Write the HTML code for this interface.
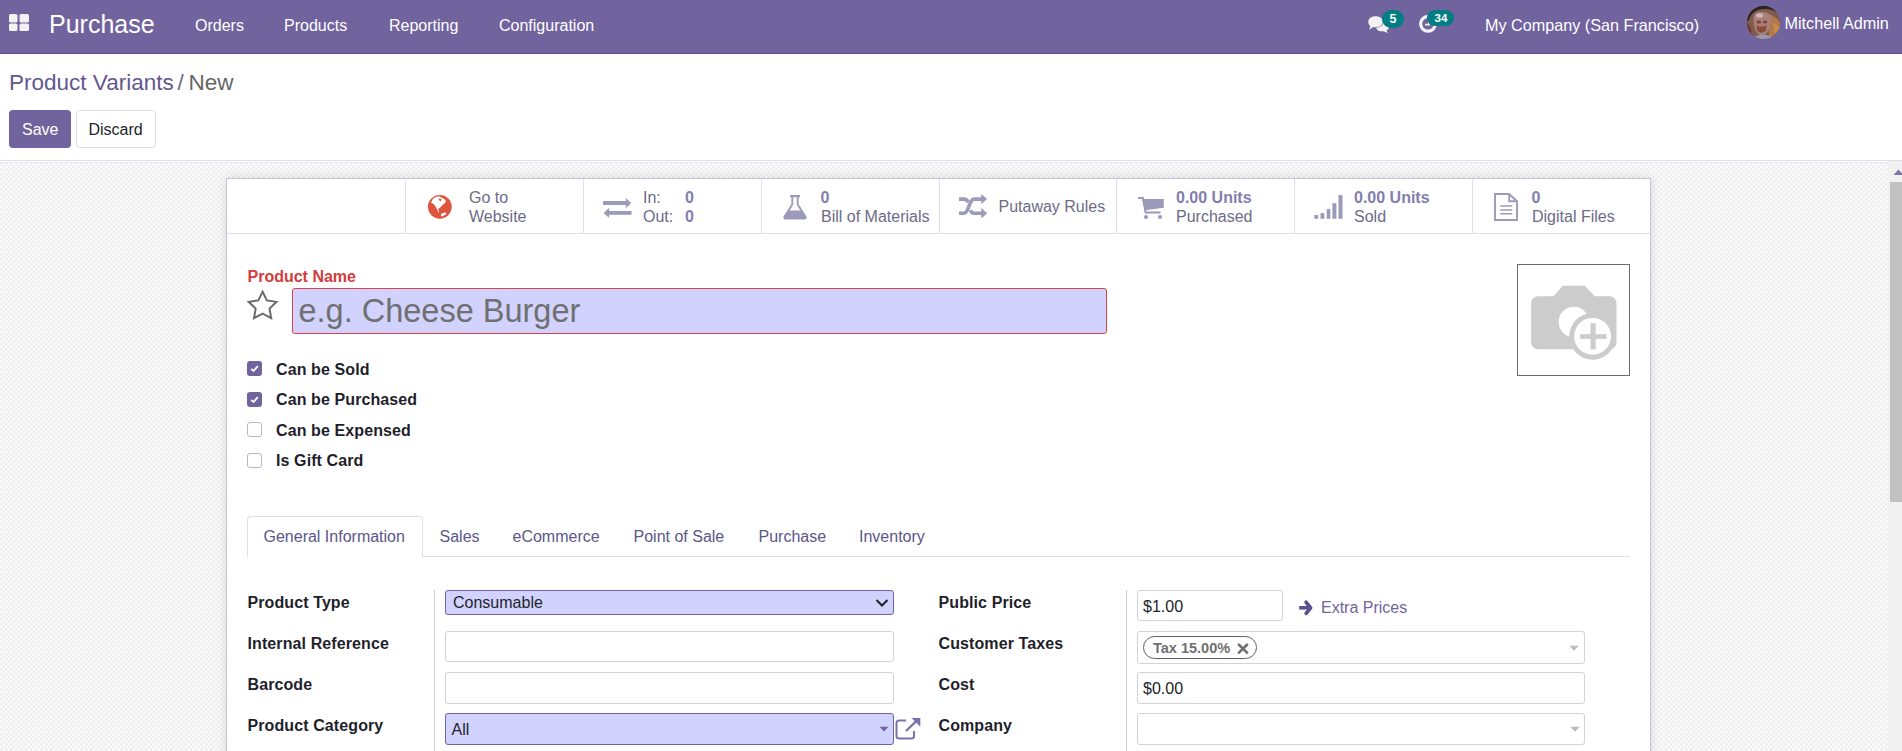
<!DOCTYPE html>
<html><head><meta charset="utf-8">
<style>
*{box-sizing:border-box;margin:0;padding:0}
html,body{width:1902px;height:751px;overflow:hidden;background:#fff;font-family:"Liberation Sans",sans-serif;color:#212529}
.a{position:absolute}
.t{position:absolute;white-space:nowrap;line-height:1}
.w{color:#fff}
.st{color:#6c6b88;font-size:16px}
.sv{color:#827eae;font-weight:bold;font-size:16px}
.lbl{font-weight:bold;font-size:16px;color:#1f1f2b;letter-spacing:0.1px}
.inp{position:absolute;border:1px solid #d0d3d8;border-radius:3px;background:#fff}
.req{background:#d2d2ff;border-color:#6f62a3}
.tab{font-size:16px;color:#5c5689}
.cb{position:absolute;left:247px;width:15px;height:15px;border-radius:3px}
.cb.on{background:#71639e}
.cb.off{border:1px solid #b9b5cf;background:#fff}
.sep{position:absolute;top:179px;width:1px;height:54px;background:#dee2e6}
</style></head><body>

<!-- NAVBAR -->
<div class="a" style="left:0;top:0;width:1902px;height:53px;background:#71639e"></div>
<div class="a" style="left:0;top:53px;width:1902px;height:1px;background:#5b4f86"></div>
<svg class="a" style="left:9px;top:14px" width="20" height="17" viewBox="0 0 20 17">
  <rect x="0" y="0" width="8.5" height="8.5" rx="1.6" fill="#f2f2f2"/>
  <rect x="10.5" y="0" width="9.5" height="8.5" rx="1.6" fill="#f2f2f2"/>
  <rect x="0" y="9.6" width="8.5" height="7.4" rx="1.6" fill="#f2f2f2"/>
  <rect x="10.5" y="9.6" width="9.5" height="7.4" rx="1.6" fill="#f2f2f2"/>
</svg>
<div class="t w" style="left:49px;top:11.6px;font-size:25px">Purchase</div>
<div class="t w" style="left:195px;top:17.7px;font-size:16px">Orders</div>
<div class="t w" style="left:284px;top:17.7px;font-size:16px">Products</div>
<div class="t w" style="left:389px;top:17.7px;font-size:16px">Reporting</div>
<div class="t w" style="left:499px;top:17.7px;font-size:16px">Configuration</div>
<!-- chat icon -->
<svg class="a" style="left:1366px;top:14px" width="26" height="22" viewBox="0 0 26 22">
  <path d="M10 12.5 C10 9 13 8 16.5 8 C20.5 8 23 10 23 12.8 C23 14.5 22 15.8 20.5 16.6 L22 19 L17.5 17.3 C16.5 17.5 15.5 17.5 14.5 17.3 C11.5 16.8 10 15 10 12.5 Z" fill="#f2f2f2"/>
  <ellipse cx="9.6" cy="7.7" rx="8.3" ry="6.2" fill="#71639e"/>
  <path d="M2.3 7.7 C2.3 4.3 5.5 2.2 9.6 2.2 C13.7 2.2 16.9 4.3 16.9 7.7 C16.9 11.1 13.7 13.2 9.6 13.2 C8.8 13.2 8 13.1 7.3 12.9 L3.2 15.8 L4.3 12 C3 11 2.3 9.5 2.3 7.7 Z" fill="#f2f2f2"/>
</svg>
<div class="a" style="left:1382px;top:9.5px;width:22px;height:18.5px;border-radius:9.5px;background:#017e84"></div>
<div class="t w" style="left:1389.5px;top:13px;font-size:12.5px;font-weight:bold">5</div>
<!-- clock icon -->
<svg class="a" style="left:1417px;top:13px" width="22" height="22" viewBox="0 0 22 22">
  <circle cx="11" cy="10.8" r="7.4" fill="none" stroke="#f2f2f2" stroke-width="3.2"/>
  <path d="M8 11.6 H12 V6" fill="none" stroke="#f2f2f2" stroke-width="1.8"/>
</svg>
<div class="a" style="left:1427px;top:9.7px;width:27px;height:16.5px;border-radius:8.5px;background:#017e84"></div>
<div class="t w" style="left:1434.5px;top:13.2px;font-size:11.5px;font-weight:bold">34</div>
<div class="t w" style="left:1485px;top:16.5px;font-size:16.2px">My Company (San Francisco)</div>
<!-- avatar -->
<svg class="a" style="left:1746px;top:6px" width="35" height="35" viewBox="0 0 35 35">
  <defs><clipPath id="av"><circle cx="17.5" cy="16.5" r="16.6"/></clipPath></defs>
  <g clip-path="url(#av)">
    <rect width="35" height="35" fill="#7e5a4c"/>
    <path d="M23 8 C28 10 33 14 35 18 V35 H23 Z" fill="#b07850"/>
    <path d="M27 16 L35 22 V30 L28 26 Z" fill="#c98a48"/>
    <path d="M0 0 H35 V10 C31 5 25 3 18 3 C10 3 5 7 3 14 L0 16 Z" fill="#2a2323"/>
    <path d="M8 9 C11 4.5 21 4.5 24 9 C25.5 12 25 18 23.5 22 C22 27 19 29 16 29 C12.5 29 10 26.5 8.8 22.5 C7.5 18 7 12.5 8 9 Z" fill="#a8807a"/>
    <ellipse cx="13.5" cy="9.5" rx="3.5" ry="2.2" fill="#cdb8bb"/>
    <ellipse cx="12.8" cy="16" rx="2.4" ry="1.6" fill="#84402f"/>
    <ellipse cx="19" cy="16" rx="2.2" ry="1.6" fill="#84402f"/>
    <path d="M10 19 C12 21 18 21 21 19 L19.5 25 C17 27 13.5 27 11.5 25 Z" fill="#8e4a38"/>
    <path d="M0 16 C4 19 6 26 7 35 H0 Z" fill="#6e3424"/>
    <ellipse cx="17" cy="34" rx="10" ry="5.5" fill="#9d98a6"/>
  </g>
</svg>
<div class="t w" style="left:1784.5px;top:15px;font-size:16.2px">Mitchell Admin</div>

<!-- CONTROL PANEL -->
<div class="t" style="left:9px;top:71.5px;font-size:22.5px;color:#62578f">Product Variants</div>
<div class="t" style="left:177.5px;top:71.5px;font-size:22.5px;color:#6d6880">/</div>
<div class="t" style="left:188.5px;top:71.5px;font-size:22.5px;color:#666">New</div>
<div class="a" style="left:9px;top:110px;width:62px;height:38px;background:#71639e;border-radius:4px"></div>
<div class="t w" style="left:22px;top:121.5px;font-size:16px">Save</div>
<div class="a" style="left:76px;top:110px;width:80px;height:38px;background:#fff;border:1px solid #dee2e6;border-radius:4px"></div>
<div class="t" style="left:88.5px;top:121.5px;font-size:16px;color:#212529">Discard</div>
<div class="a" style="left:0;top:160px;width:1902px;height:1px;background:#dde1e6"></div>
<div class="a" style="left:0;top:162px;width:1888px;height:1px;background:#e3e6ea"></div>

<!-- CONTENT BG -->
<div class="a" style="left:0;top:163px;width:1888px;height:588px;background-color:#fcfcfc;background-image:radial-gradient(circle at 1.25px 1.25px,#e9e9e9 0,#ececec 0.7px,rgba(236,236,236,0) 1.9px),radial-gradient(circle at 3.75px 3.75px,#e9e9e9 0,#ececec 0.7px,rgba(236,236,236,0) 1.9px);background-size:5px 5px"></div>
<div class="a" style="left:1888px;top:161px;width:14px;height:590px;background:#f1f1f1"></div>
<svg class="a" style="left:1893px;top:169px" width="9" height="7" viewBox="0 0 9 7"><path d="M0.5 6 L5.5 0.5 L10.5 6 Z" fill="#7b76a8"/></svg>
<div class="a" style="left:1890px;top:182px;width:12px;height:320px;background:#c1c1c1"></div>

<!-- SHEET -->
<div class="a" style="left:226px;top:178px;width:1425px;height:600px;background:#fff;border:1px solid #c4c3d5;box-shadow:0 0 10px rgba(40,40,80,.13)"></div>
<div class="a" style="left:227px;top:233px;width:1423px;height:1px;background:#dee2e6"></div>
<div class="sep" style="left:405px"></div>
<div class="sep" style="left:583px"></div>
<div class="sep" style="left:761px"></div>
<div class="sep" style="left:939px"></div>
<div class="sep" style="left:1116px"></div>
<div class="sep" style="left:1294px"></div>
<div class="sep" style="left:1472px"></div>

<!-- button 1: globe -->
<svg class="a" style="left:422px;top:189px" width="36" height="36" viewBox="0 0 36 36">
  <circle cx="17.83" cy="17.83" r="11.9" fill="#de5540"/>
  <path d="M9.35 12.94 L11.03 9.59 L14.38 7.67 L17.26 7.19 L19.18 8.39 L23.01 10.55 L23.97 12.46 L22.53 14.38 L20.13 16.30 L18.70 18.22 L16.78 19.18 L16.30 20.61 L17.02 22.53 L16.78 23.97 L15.34 21.09 L13.90 18.22 L11.98 15.34 L9.35 13.66 Z" fill="#fff"/>
  <path d="M16.54 10.31 L18.22 9.35 L19.42 10.79 L18.70 12.22 L17.26 11.51 Z" fill="#de5540"/>
  <path d="M18.94 25.41 L20.61 23.97 L23.49 23.49 L24.45 24.45 L22.53 26.37 L20.13 27.56 L18.94 26.85 Z" fill="#fff"/>
</svg>
<div class="t st" style="left:469px;top:189.5px">Go to</div>
<div class="t st" style="left:469px;top:209px">Website</div>

<!-- button 2: exchange -->
<svg class="a" style="left:603px;top:198px" width="29" height="21" viewBox="0 0 29 21">
  <rect x="0" y="3" width="23.5" height="4" fill="#9c9aba"/>
  <path d="M22.8 0 L28.3 5 L22.8 10.2 Z" fill="#9c9aba"/>
  <rect x="5.5" y="13" width="23" height="3.8" fill="#9c9aba"/>
  <path d="M6.2 9.7 L0.6 14.9 L6.2 20 Z" fill="#9c9aba"/>
</svg>
<div class="t st" style="left:643px;top:189.5px">In:</div>
<div class="t st" style="left:643px;top:209px">Out:</div>
<div class="t sv" style="left:685px;top:189.5px">0</div>
<div class="t sv" style="left:685px;top:209px">0</div>

<!-- button 3: flask -->
<svg class="a" style="left:783px;top:194px" width="25" height="26" viewBox="0 0 25 26">
  <rect x="7" y="1" width="10" height="2.2" fill="#9c9aba"/>
  <path d="M9.3 3 V10.5 L1.5 22.8 C1 23.8 1.5 24.6 2.6 24.6 H21.4 C22.5 24.6 23 23.8 22.5 22.8 L14.7 10.5 V3" fill="none" stroke="#9c9aba" stroke-width="1.9"/>
  <path d="M5.8 16.5 H18.2 L22.5 23 C23 24 22.5 24.6 21.4 24.6 H2.6 C1.5 24.6 1 24 1.5 23 Z" fill="#9c9aba"/>
</svg>
<div class="t sv" style="left:820.5px;top:189.5px">0</div>
<div class="t st" style="left:821px;top:209px">Bill of Materials</div>

<!-- button 4: shuffle -->
<svg class="a" style="left:959px;top:194px" width="29" height="25" viewBox="0 0 29 25">
  <g fill="none" stroke="#9c9aba" stroke-width="3.6">
    <path d="M0 19.3 H5 C10 19.3 10 5.1 15 5.1 H23"/>
    <path d="M0 5.1 H5 C7 5.1 8.3 6.3 9.3 8.3"/>
    <path d="M11.3 16.2 C12.3 18.3 13 19.3 15 19.3 H23"/>
  </g>
  <path d="M22.3 0 L28.1 5.1 L22.3 10.3 Z M22.3 14.1 L28.1 19.3 L22.3 24.5 Z" fill="#9c9aba"/>
</svg>
<div class="t st" style="left:998.5px;top:198.5px">Putaway Rules</div>

<!-- button 5: cart -->
<svg class="a" style="left:1137px;top:196px" width="28" height="24" viewBox="0 0 28 24">
  <path d="M1 2 H6 L8.5 16.5 H23.5" fill="none" stroke="#9c9aba" stroke-width="1.9"/>
  <path d="M5.2 3 H26.8 V11.8 L8 14.2 Z" fill="#9c9aba"/>
  <circle cx="9" cy="21" r="2.1" fill="#9c9aba"/>
  <circle cx="23" cy="21" r="2.1" fill="#9c9aba"/>
</svg>
<div class="t sv" style="left:1176px;top:189.5px">0.00 Units</div>
<div class="t st" style="left:1176px;top:209px">Purchased</div>

<!-- button 6: signal -->
<svg class="a" style="left:1314px;top:195px" width="30" height="24" viewBox="0 0 30 24">
  <rect x="0.4" y="20" width="3.8" height="3.8" fill="#9c9aba"/>
  <rect x="6.5" y="18.1" width="3.8" height="5.7" fill="#9c9aba"/>
  <rect x="12.7" y="14.1" width="3.6" height="9.7" fill="#9c9aba"/>
  <rect x="18.4" y="8.2" width="4" height="15.6" fill="#9c9aba"/>
  <rect x="24.5" y="0.1" width="4" height="23.7" fill="#9c9aba"/>
</svg>
<div class="t sv" style="left:1354px;top:189.5px">0.00 Units</div>
<div class="t st" style="left:1354px;top:209px">Sold</div>

<!-- button 7: file -->
<svg class="a" style="left:1493px;top:192px" width="27" height="30" viewBox="0 0 27 30">
  <path d="M2 2 H16.2 L24 9.2 V28 H2 Z" fill="none" stroke="#9c9aba" stroke-width="1.9"/>
  <path d="M16.2 2 V9.2 H24" fill="none" stroke="#9c9aba" stroke-width="1.9"/>
  <path d="M7.3 13.9 H19.3 M7.3 17.9 H19.3 M7.3 21.7 H19.3" stroke="#9c9aba" stroke-width="1.5"/>
</svg>
<div class="t sv" style="left:1531.5px;top:189.5px">0</div>
<div class="t st" style="left:1532px;top:209px">Digital Files</div>

<!-- TITLE -->
<div class="t" style="left:247.5px;top:269px;font-size:16px;font-weight:bold;color:#d23c3c">Product Name</div>
<svg class="a" style="left:246px;top:289px" width="34" height="33" viewBox="0 0 34 33">
  <path d="M16.60 2.75 L20.89 11.44 L30.49 12.84 L23.54 19.61 L25.18 29.16 L16.60 24.65 L8.02 29.16 L9.66 19.61 L2.71 12.84 L12.31 11.44 Z" stroke-linejoin="miter" fill="none" stroke="#6b6b6b" stroke-width="2"/>
</svg>
<div class="a" style="left:292px;top:288px;width:815px;height:46px;background:#d2d2ff;border:1px solid #d9404a;border-radius:3px"></div>
<div class="t" style="left:298.5px;top:294.6px;font-size:32.5px;color:#707070">e.g. Cheese Burger</div>

<!-- image -->
<div class="a" style="left:1517px;top:264px;width:113px;height:112px;border:1px solid #6c6c6c;background:#fff"></div>
<svg class="a" style="left:1530px;top:284px" width="90" height="80" viewBox="0 0 90 80">
  <path d="M23.3 12.2 L32.8 1.8 H54.8 L64.8 12.2 H79.5 C83.5 12.2 86.5 15.2 86.5 19.2 V58.3 C86.5 62.3 83.5 65.3 79.5 65.3 H8.1 C4.1 65.3 1.1 62.3 1.1 58.3 V19.2 C1.1 15.2 4.1 12.2 8.1 12.2 Z" fill="#cccccc"/>
  <circle cx="43.8" cy="38" r="15.2" fill="#fff"/>
  <circle cx="62.6" cy="52.35" r="23.35" fill="#cccccc"/>
  <circle cx="62.6" cy="52.35" r="18.4" fill="#fff"/>
  <rect x="50.1" y="50.2" width="26.4" height="4.7" fill="#cccccc"/>
  <rect x="60.5" y="39.2" width="5.2" height="26.3" fill="#cccccc"/>
</svg>

<!-- checkboxes -->
<div class="cb on" style="top:361px"></div>
<svg class="a" style="left:247px;top:361px" width="15" height="15" viewBox="0 0 15 15"><path d="M4.2 7.8 L6.5 10 L10.8 5.2" fill="none" stroke="#fff" stroke-width="1.8"/></svg>
<div class="cb on" style="top:392px"></div>
<svg class="a" style="left:247px;top:392px" width="15" height="15" viewBox="0 0 15 15"><path d="M4.2 7.8 L6.5 10 L10.8 5.2" fill="none" stroke="#fff" stroke-width="1.8"/></svg>
<div class="cb off" style="top:422px"></div>
<div class="cb off" style="top:453px"></div>
<div class="t lbl" style="left:276px;top:361.5px">Can be Sold</div>
<div class="t lbl" style="left:276px;top:391.5px">Can be Purchased</div>
<div class="t lbl" style="left:276px;top:422.8px">Can be Expensed</div>
<div class="t lbl" style="left:276px;top:452.8px">Is Gift Card</div>

<!-- TABS -->
<div class="a" style="left:247px;top:556px;width:1383px;height:1px;background:#dee2e6"></div>
<div class="a" style="left:247px;top:516px;width:176px;height:41px;background:#fff;border:1px solid #dee2e6;border-bottom:none;border-radius:4px 4px 0 0"></div>
<div class="t tab" style="left:263.5px;top:528.5px">General Information</div>
<div class="t tab" style="left:439.5px;top:528.5px">Sales</div>
<div class="t tab" style="left:512.5px;top:528.5px">eCommerce</div>
<div class="t tab" style="left:633.5px;top:528.5px">Point of Sale</div>
<div class="t tab" style="left:758.5px;top:528.5px">Purchase</div>
<div class="t tab" style="left:859px;top:528.5px">Inventory</div>

<!-- LEFT GROUP -->
<div class="a" style="left:434px;top:590px;width:1px;height:161px;background:#cfcfcf"></div>
<div class="t lbl" style="left:247.5px;top:594.5px">Product Type</div>
<div class="t lbl" style="left:247.5px;top:636px">Internal Reference</div>
<div class="t lbl" style="left:247.5px;top:677px">Barcode</div>
<div class="t lbl" style="left:247.5px;top:718px">Product Category</div>
<div class="inp req" style="left:445px;top:590px;width:449px;height:25px;border-radius:3px"></div>
<div class="t" style="left:453px;top:595px;font-size:16px;color:#212529">Consumable</div>
<svg class="a" style="left:875px;top:598px" width="14" height="10" viewBox="0 0 14 10"><path d="M1.5 2 L7 7.5 L12.5 2" fill="none" stroke="#222" stroke-width="2"/></svg>
<div class="inp" style="left:445px;top:631px;width:449px;height:31px"></div>
<div class="inp" style="left:445px;top:672px;width:449px;height:32px"></div>
<div class="inp req" style="left:445px;top:713px;width:449px;height:32px"></div>
<div class="t" style="left:451.5px;top:721.5px;font-size:16px;color:#212529">All</div>
<svg class="a" style="left:879px;top:726px" width="10" height="6" viewBox="0 0 10 6"><path d="M0.5 0.8 H9.5 L5 5.6 Z" fill="#71639e"/></svg>
<svg class="a" style="left:895px;top:717px" width="27" height="23" viewBox="0 0 27 23">
  <path d="M11 3.5 H4 C2.3 3.5 1.5 4.5 1.5 6 V19 C1.5 20.5 2.3 21.5 4 21.5 H16.5 C18.2 21.5 19 20.5 19 19 V14" fill="none" stroke="#7d70ae" stroke-width="2"/>
  <path d="M11 14 L23.5 2" fill="none" stroke="#7d70ae" stroke-width="2.4"/>
  <path d="M16.5 1 H25.3 V9.8 Z" fill="#7d70ae"/>
</svg>

<!-- RIGHT GROUP -->
<div class="a" style="left:1126px;top:590px;width:1px;height:161px;background:#cfcfcf"></div>
<div class="t lbl" style="left:938.5px;top:594.5px">Public Price</div>
<div class="t lbl" style="left:938.5px;top:635.5px">Customer Taxes</div>
<div class="t lbl" style="left:938.5px;top:676.5px">Cost</div>
<div class="t lbl" style="left:938.5px;top:717.5px">Company</div>
<div class="inp" style="left:1137px;top:590px;width:146px;height:31px"></div>
<div class="t" style="left:1143px;top:598.5px;font-size:16px;color:#212529">$1.00</div>
<svg class="a" style="left:1298px;top:600px" width="17" height="16" viewBox="0 0 17 16"><path d="M1.2 7.8 H11" fill="none" stroke="#5c5091" stroke-width="3.6"/><path d="M8.2 2.3 L12.6 7.8 L8.2 13.3" fill="none" stroke="#5c5091" stroke-width="3.7" stroke-linejoin="round" stroke-linecap="round"/></svg>
<div class="t" style="left:1321px;top:600px;font-size:16px;color:#71639e">Extra Prices</div>
<div class="inp" style="left:1137px;top:631px;width:448px;height:33px"></div>
<div class="a" style="left:1143px;top:636px;width:114px;height:23px;border:1px solid #5f5f66;border-radius:12px"></div>
<div class="t" style="left:1153px;top:640.6px;font-size:14.5px;font-weight:bold;color:#707070">Tax 15.00%</div>
<svg class="a" style="left:1237px;top:643px" width="12" height="11" viewBox="0 0 12 11"><path d="M2 1.8 L10 9.6 M10 1.8 L2 9.6" stroke="#707070" stroke-width="2.7" stroke-linecap="round"/></svg>
<svg class="a" style="left:1569px;top:645px" width="11" height="7" viewBox="0 0 11 7"><path d="M0.2 0.7 H9.8 L5 5.8 Z" fill="#bdbdbd"/></svg>
<div class="inp" style="left:1137px;top:672px;width:448px;height:32px"></div>
<div class="t" style="left:1143px;top:680.5px;font-size:16px;color:#212529">$0.00</div>
<div class="inp" style="left:1137px;top:713px;width:448px;height:32px"></div>
<svg class="a" style="left:1570px;top:726px" width="11" height="7" viewBox="0 0 11 7"><path d="M0.2 0.7 H9.8 L5 5.8 Z" fill="#bdbdbd"/></svg>

</body></html>
